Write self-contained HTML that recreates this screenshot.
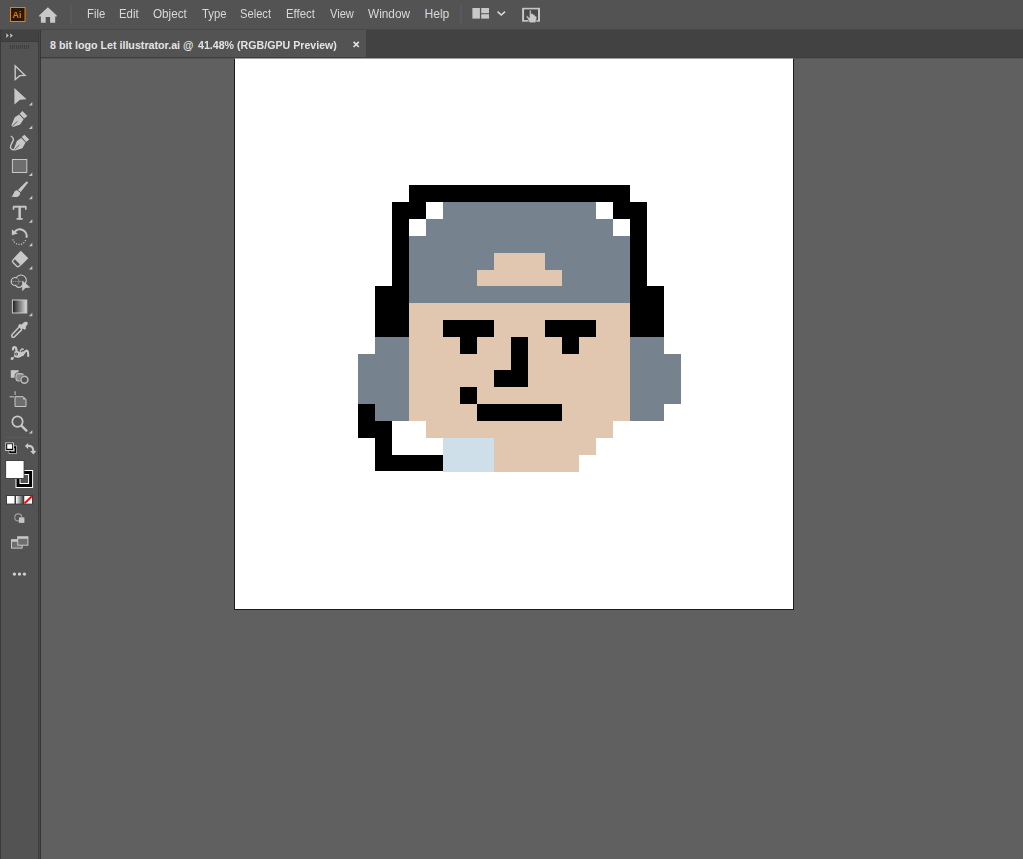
<!DOCTYPE html>
<html><head><meta charset="utf-8"><title>Illustrator</title>
<style>
html,body{margin:0;padding:0;}
body{width:1023px;height:859px;overflow:hidden;background:#606060;position:relative;font-family:"Liberation Sans",sans-serif;}
#menubar{position:absolute;left:0;top:0;width:1023px;height:29px;background:#535353;}
#menubar .mi{position:absolute;top:6px;font-size:12px;line-height:16px;color:#d8d8d8;white-space:nowrap;transform-origin:0 50%;}
#tabbar{position:absolute;left:0;top:29px;width:1023px;height:29px;background:#424242;}
#tabtop{position:absolute;left:0;top:29px;width:1023px;height:1px;background:#484848;}
#tab{position:absolute;left:41px;top:30px;width:325px;height:27px;background:#535353;}
#tab .tt{position:absolute;left:9px;top:8px;font-size:10.7px;font-weight:bold;line-height:14px;color:#e4e4e4;white-space:nowrap;transform-origin:0 50%;}
#tab .tx{position:absolute;left:311px;top:6px;font-size:10px;font-weight:bold;line-height:14px;color:#e4e4e4;}
#tabline{position:absolute;left:41px;top:57px;width:982px;height:1px;background:#3e3e3e;}
#canvas{position:absolute;left:41px;top:58px;width:982px;height:801px;background:#606060;border-top:1px solid #545454;box-sizing:border-box;}
#artboard{position:absolute;left:234px;top:58px;width:558px;height:550px;background:#fff;border:1px solid #1a1a1a;border-top-color:#a0a0a0;}
#tools{position:absolute;left:0;top:30px;width:41px;height:829px;background:#535353;}
#tools .hd{position:absolute;left:0;top:0;width:39px;height:11px;background:#424242;}
#tools .hl{position:absolute;left:0;top:11px;width:39px;height:1px;background:#3c3c3c;}
#tools .le{position:absolute;left:0;top:0;width:1px;height:829px;background:#3a3a3a;}
#tools .r1{position:absolute;left:38px;top:0;width:1px;height:829px;background:#3c3c3c;}
#tools .r2{position:absolute;left:39px;top:0;width:1px;height:829px;background:#484848;}
#tools .r3{position:absolute;left:40px;top:0;width:1px;height:829px;background:#363636;}
svg{position:absolute;left:0;top:0;overflow:visible;}
svg text{font-family:"Liberation Sans",sans-serif;}
</style></head><body>

<div id="canvas"></div>
<div id="artboard"></div>
<svg id="art" width="1023" height="859" viewBox="0 0 1023 859" shape-rendering="crispEdges">
<rect x="408.83" y="185.40" width="221.13" height="16.82" fill="#000000"/>
<rect x="391.82" y="202.22" width="34.02" height="16.82" fill="#000000"/>
<rect x="442.85" y="202.22" width="153.09" height="16.82" fill="#76838f"/>
<rect x="612.95" y="202.22" width="34.02" height="16.82" fill="#000000"/>
<rect x="391.82" y="219.04" width="17.01" height="16.82" fill="#000000"/>
<rect x="425.84" y="219.04" width="187.11" height="16.82" fill="#76838f"/>
<rect x="629.96" y="219.04" width="17.01" height="16.82" fill="#000000"/>
<rect x="391.82" y="235.86" width="17.01" height="16.82" fill="#000000"/>
<rect x="408.83" y="235.86" width="221.13" height="16.82" fill="#76838f"/>
<rect x="629.96" y="235.86" width="17.01" height="16.82" fill="#000000"/>
<rect x="391.82" y="252.68" width="17.01" height="16.82" fill="#000000"/>
<rect x="408.83" y="252.68" width="85.05" height="16.82" fill="#76838f"/>
<rect x="493.88" y="252.68" width="51.03" height="16.82" fill="#e2c7b0"/>
<rect x="544.91" y="252.68" width="85.05" height="16.82" fill="#76838f"/>
<rect x="629.96" y="252.68" width="17.01" height="16.82" fill="#000000"/>
<rect x="391.82" y="269.50" width="17.01" height="16.82" fill="#000000"/>
<rect x="408.83" y="269.50" width="68.04" height="16.82" fill="#76838f"/>
<rect x="476.87" y="269.50" width="85.05" height="16.82" fill="#e2c7b0"/>
<rect x="561.92" y="269.50" width="68.04" height="16.82" fill="#76838f"/>
<rect x="629.96" y="269.50" width="17.01" height="16.82" fill="#000000"/>
<rect x="374.81" y="286.32" width="34.02" height="16.82" fill="#000000"/>
<rect x="408.83" y="286.32" width="221.13" height="16.82" fill="#76838f"/>
<rect x="629.96" y="286.32" width="34.02" height="16.82" fill="#000000"/>
<rect x="374.81" y="303.14" width="34.02" height="16.82" fill="#000000"/>
<rect x="408.83" y="303.14" width="221.13" height="16.82" fill="#e2c7b0"/>
<rect x="629.96" y="303.14" width="34.02" height="16.82" fill="#000000"/>
<rect x="374.81" y="319.96" width="34.02" height="16.82" fill="#000000"/>
<rect x="408.83" y="319.96" width="34.02" height="16.82" fill="#e2c7b0"/>
<rect x="442.85" y="319.96" width="51.03" height="16.82" fill="#000000"/>
<rect x="493.88" y="319.96" width="51.03" height="16.82" fill="#e2c7b0"/>
<rect x="544.91" y="319.96" width="51.03" height="16.82" fill="#000000"/>
<rect x="595.94" y="319.96" width="34.02" height="16.82" fill="#e2c7b0"/>
<rect x="629.96" y="319.96" width="34.02" height="16.82" fill="#000000"/>
<rect x="374.81" y="336.78" width="34.02" height="16.82" fill="#76838f"/>
<rect x="408.83" y="336.78" width="51.03" height="16.82" fill="#e2c7b0"/>
<rect x="459.86" y="336.78" width="17.01" height="16.82" fill="#000000"/>
<rect x="476.87" y="336.78" width="34.02" height="16.82" fill="#e2c7b0"/>
<rect x="510.89" y="336.78" width="17.01" height="16.82" fill="#000000"/>
<rect x="527.90" y="336.78" width="34.02" height="16.82" fill="#e2c7b0"/>
<rect x="561.92" y="336.78" width="17.01" height="16.82" fill="#000000"/>
<rect x="578.93" y="336.78" width="51.03" height="16.82" fill="#e2c7b0"/>
<rect x="629.96" y="336.78" width="34.02" height="16.82" fill="#76838f"/>
<rect x="357.80" y="353.60" width="51.03" height="16.82" fill="#76838f"/>
<rect x="408.83" y="353.60" width="102.06" height="16.82" fill="#e2c7b0"/>
<rect x="510.89" y="353.60" width="17.01" height="16.82" fill="#000000"/>
<rect x="527.90" y="353.60" width="102.06" height="16.82" fill="#e2c7b0"/>
<rect x="629.96" y="353.60" width="51.03" height="16.82" fill="#76838f"/>
<rect x="357.80" y="370.42" width="51.03" height="16.82" fill="#76838f"/>
<rect x="408.83" y="370.42" width="85.05" height="16.82" fill="#e2c7b0"/>
<rect x="493.88" y="370.42" width="34.02" height="16.82" fill="#000000"/>
<rect x="527.90" y="370.42" width="102.06" height="16.82" fill="#e2c7b0"/>
<rect x="629.96" y="370.42" width="51.03" height="16.82" fill="#76838f"/>
<rect x="357.80" y="387.24" width="51.03" height="16.82" fill="#76838f"/>
<rect x="408.83" y="387.24" width="51.03" height="16.82" fill="#e2c7b0"/>
<rect x="459.86" y="387.24" width="17.01" height="16.82" fill="#000000"/>
<rect x="476.87" y="387.24" width="153.09" height="16.82" fill="#e2c7b0"/>
<rect x="629.96" y="387.24" width="51.03" height="16.82" fill="#76838f"/>
<rect x="357.80" y="404.06" width="17.01" height="16.82" fill="#000000"/>
<rect x="374.81" y="404.06" width="34.02" height="16.82" fill="#76838f"/>
<rect x="408.83" y="404.06" width="68.04" height="16.82" fill="#e2c7b0"/>
<rect x="476.87" y="404.06" width="85.05" height="16.82" fill="#000000"/>
<rect x="561.92" y="404.06" width="68.04" height="16.82" fill="#e2c7b0"/>
<rect x="629.96" y="404.06" width="34.02" height="16.82" fill="#76838f"/>
<rect x="357.80" y="420.88" width="34.02" height="16.82" fill="#000000"/>
<rect x="425.84" y="420.88" width="187.11" height="16.82" fill="#e2c7b0"/>
<rect x="374.81" y="437.70" width="17.01" height="16.82" fill="#000000"/>
<rect x="442.85" y="437.70" width="51.03" height="16.82" fill="#cfdfea"/>
<rect x="493.88" y="437.70" width="102.06" height="16.82" fill="#e2c7b0"/>
<rect x="374.81" y="454.52" width="68.04" height="16.82" fill="#000000"/>
<rect x="442.85" y="454.52" width="51.03" height="17.62" fill="#cfdfea"/>
<rect x="493.88" y="454.52" width="85.05" height="17.62" fill="#e2c7b0"/>

</svg>

<div id="menubar">
<span class="mi" style="left:87px;transform:scaleX(0.94)">File</span>
<span class="mi" style="left:119px;transform:scaleX(0.95)">Edit</span>
<span class="mi" style="left:153px;transform:scaleX(0.975)">Object</span>
<span class="mi" style="left:202px;transform:scaleX(0.94)">Type</span>
<span class="mi" style="left:240px;transform:scaleX(0.93)">Select</span>
<span class="mi" style="left:286.3px;transform:scaleX(0.95)">Effect</span>
<span class="mi" style="left:329.6px;transform:scaleX(0.925)">View</span>
<span class="mi" style="left:368px;transform:scaleX(0.985)">Window</span>
<span class="mi" style="left:424.6px;transform:scaleX(1.0)">Help</span>
</div>
<div id="tabbar"></div><div id="tabtop"></div>
<div id="tab"><span class="tt">8 bit logo Let illustrator.ai @</span><span class="tt" style="left:157px;transform:scaleX(0.995)">41.48% (RGB/GPU Preview)</span></div>
<div id="tabline"></div>
<div id="tools"><div class="hd"></div><div class="hl"></div><div class="le"></div><div class="r1"></div><div class="r2"></div><div class="r3"></div></div>

<svg id="ui" width="1023" height="859" viewBox="0 0 1023 859">
<defs>
<filter id="nf" x="-10%" y="-10%" width="120%" height="120%"><feOffset dx="0" dy="0"/></filter>
<linearGradient id="gr" x1="0" x2="1" y1="0" y2="0"><stop offset="0" stop-color="#1e1e1e"/><stop offset="1" stop-color="#dcdcdc"/></linearGradient>
<linearGradient id="gr2" x1="0" x2="1" y1="0" y2="0"><stop offset="0" stop-color="#ffffff"/><stop offset="1" stop-color="#3a3a3a"/></linearGradient>
</defs>
<!-- Ai logo -->
<rect x="10.5" y="7.5" width="14.5" height="14" fill="#2e1700" stroke="#f07d0a" stroke-width="1"/>
<text x="12.6" y="18.3" font-size="9" font-weight="bold" filter="url(#nf)" fill="#e07a0a">Ai</text>
<!-- home -->
<path d="M47.9,7.3 L56.8,15.6 L56.8,16.6 L55.2,16.6 L55.2,22.7 L50.1,22.7 L50.1,17 L45.7,17 L45.7,22.7 L40.9,22.7 L40.9,16.6 L39.1,16.6 L39.1,15.6 Z" fill="#c8c8c8"/>
<rect x="70.5" y="5" width="1" height="19" fill="#606060"/>
<rect x="460.5" y="5" width="1" height="19" fill="#606060"/>
<!-- workspace switcher -->
<rect x="472.4" y="8" width="7.5" height="10.6" fill="#c8c8c8"/>
<rect x="481.2" y="8" width="7.8" height="5.2" fill="#c8c8c8"/>
<rect x="481.2" y="14.2" width="7.8" height="4.4" fill="#c8c8c8"/>
<path d="M497.6,11.6 L501.3,15 L505,11.6" fill="none" stroke="#dcdcdc" stroke-width="1.5"/>
<!-- touch workspace -->
<rect x="522.1" y="7.8" width="17.9" height="13.9" fill="#c6c6c6"/>
<rect x="524.1" y="9.4" width="13.9" height="10.7" fill="#4a4a4a"/>
<path d="M529.4,10.4 Q530.2,9.5 531.1,10.4 L531.1,13.6 L532.4,13.2 L533.2,14.4 L534.4,14.6 L535,15.8 L536.2,16.2 Q537,16.8 536.8,18 L535.6,22.8 L529.9,22.8 L526.2,16.6 Q526,15.6 527,15.6 L529.4,17.8 Z" fill="#c8c8c8" stroke="#4a4a4a" stroke-width="0.5"/>
<path d="M353.6,41.8 L358.8,47 M358.8,41.8 L353.6,47" stroke="#e0e0e0" stroke-width="1.7" fill="none"/>
<!-- toolbar chevrons / grip -->
<path d="M5.9,33.2 L8.8,35.6 L5.9,38 L6.6,35.6 Z M9.9,33.2 L12.8,35.6 L9.9,38 L10.6,35.6 Z" fill="#cfcfcf"/>
<g fill="#3e3e3e"><rect x="10" y="45" width="1" height="4"/><rect x="12" y="45" width="1" height="4"/><rect x="14" y="45" width="1" height="4"/><rect x="16" y="45" width="1" height="4"/><rect x="18" y="45" width="1" height="4"/><rect x="20" y="45" width="1" height="4"/><rect x="22" y="45" width="1" height="4"/><rect x="24" y="45" width="1" height="4"/><rect x="26" y="45" width="1" height="4"/><rect x="28" y="45" width="1" height="4"/></g>

<!-- selection -->
<path d="M15.2,66 L15.2,79.6 L19.9,75.6 L25,75.3 Z" fill="none" stroke="#c8c8c8" stroke-width="1.4" stroke-miterlimit="10"/>
<!-- direct selection -->
<path d="M14.4,88 L14.4,104.6 L20,99.8 L26.6,99.2 Z" fill="#c8c8c8"/>
<path d="M32.3,102 v3.4 h-3.4 z" fill="#c8c8c8"/>
<!-- pen -->
<g fill="#c8c8c8">
<path d="M22.4,111.1 L27.4,115.9 L24.2,118.6 L19.7,113.7 Z"/>
<path d="M19.1,114.5 L23.6,119.2 L20.2,124.6 L13.1,127 L11.3,125.4 L14.8,117.3 Z"/>
</g>
<path d="M12.4,126 L17.4,121.4" stroke="#535353" stroke-width="0.9" fill="none"/>
<path d="M32.3,125.6 v3.4 h-3.4 z" fill="#c8c8c8"/>
<!-- curvature -->
<g fill="#c8c8c8">
<path d="M24.4,134.7 L29.2,139.5 L26.2,141.9 L21.7,137.1 Z"/>
<path d="M21.1,138 L25.6,142.5 L22.4,148.2 L15.1,150.6 L13.6,149.3 L16.9,140.9 Z"/>
</g>
<path d="M14.6,149.6 L19.4,145" stroke="#535353" stroke-width="0.9" fill="none"/>
<path d="M10.8,136 C13.6,137.6 14,139.4 12.6,141.8 C11,144.6 9.6,146.6 10.8,148.4 C11.8,149.8 13.2,150 14.6,149.6" fill="none" stroke="#c8c8c8" stroke-width="1.4"/>
<!-- rectangle -->
<rect x="12.4" y="159.5" width="14.4" height="13" fill="#6e6e6e" stroke="#c8c8c8" stroke-width="1"/>
<path d="M32.3,172.5 v3.4 h-3.4 z" fill="#c8c8c8"/>
<!-- brush -->
<path d="M26.6,181.6 C27.6,181.2 28.2,182 27.6,183.2 L20.7,192.1 L17.9,189.9 L25.4,182.4 Z" fill="#c8c8c8"/>
<path d="M17.4,190.4 L20.2,192.7 C20.4,194.2 19.6,195.6 18.2,196.4 C16.6,197.2 14,197 11.3,196.8 C13,195.6 13.4,193.6 14.2,192.2 C15,190.8 16.4,190 17.4,190.4 Z" fill="#c8c8c8"/>
<path d="M32.3,195.8 v3.4 h-3.4 z" fill="#c8c8c8"/>
<!-- type -->
<text x="12.9" y="218.9" font-size="19" filter="url(#nf)" fill="#c8c8c8" stroke="#c8c8c8" stroke-width="0.3" textLength="13.5" lengthAdjust="spacingAndGlyphs">T</text>
<path d="M12.7,206.4 h1.6 v3.4 h-1.6 z M25,206.4 h1.6 v3.4 h-1.6 z M16.6,218 h6.1 v1.8 h-6.1 z" fill="#c8c8c8"/>
<path d="M32.3,219.3 v3.4 h-3.4 z" fill="#c8c8c8"/>
<!-- rotate -->
<path d="M14.6,232 A6.7,6.7 0 0 1 26.4,237.8" fill="none" stroke="#c8c8c8" stroke-width="2"/>
<path d="M11.9,229.4 L11.9,235.2 L17.8,233.6 Z" fill="#c8c8c8"/>
<path d="M25.6,240.2 A6.7,6.7 0 0 1 12.8,239.2" fill="none" stroke="#c8c8c8" stroke-width="1.3" stroke-dasharray="1.1 1.5"/>
<path d="M32.3,242.8 v3.4 h-3.4 z" fill="#c8c8c8"/>
<!-- eraser -->
<path d="M20.8,250.8 L28.3,258.2 L21.1,265.5 L13.7,258.2 Z" fill="#c8c8c8"/>
<path d="M14.34,258.83 L13.01,260.19 Q11.89,261.33 13.03,262.45 L16.80,266.17 Q17.94,267.30 19.06,266.16 L20.39,264.80" fill="none" stroke="#c8c8c8" stroke-width="1.4"/>
<path d="M32.3,266.1 v3.4 h-3.4 z" fill="#c8c8c8"/>
<!-- shape builder -->
<g fill="none" stroke="#c4c4c4" stroke-width="1.4">
<circle cx="15.2" cy="281.5" r="3.9"/><circle cx="21" cy="280.3" r="5.2"/><circle cx="19" cy="283.6" r="3.7"/>
</g>
<g fill="#535353">
<circle cx="15.2" cy="281.5" r="3.2"/><circle cx="21" cy="280.3" r="4.5"/><circle cx="19" cy="283.6" r="3"/>
</g>
<path d="M17.6,278.4 A3.9,3.9 0 0 1 17.6,284.6" fill="none" stroke="#8c8c8c" stroke-width="1"/>
<path d="M12.8,281.5 H22" fill="none" stroke="#b0b0b0" stroke-width="0.8" stroke-dasharray="1 0.9"/>
<path d="M22.2,280.6 L22.2,291.2 L25.4,288 L30.4,287.4 Z" fill="#c8c8c8"/>
<!-- gradient -->
<rect x="12.4" y="300" width="14.4" height="13" fill="url(#gr)" stroke="#c8c8c8" stroke-width="1"/>
<path d="M32.3,312.8 v3.4 h-3.4 z" fill="#c8c8c8"/>
<!-- eyedropper -->
<path d="M25.9,321.7 C27.2,321.5 27.9,322.4 27.7,323.6 C27.6,324.6 27,325.4 26.2,326.2 L25.7,326.8 L26.1,328.6 L24.6,329.7 L22.8,328.6 L21.6,329.8 L18.3,326.4 L18.3,325.3 L19.8,324 L21.7,324.4 L23.4,322.7 C24.2,322.1 25,321.8 25.9,321.7 Z" fill="#c8c8c8"/>
<path d="M19.6,326.6 L12.3,334.3 Q11.1,335.8 12,336.9 Q13,337.8 14.4,336.8 L22,329.4" fill="none" stroke="#c8c8c8" stroke-width="1.5"/>
<!-- puppet warp -->
<g fill="none" stroke="#c8c8c8" stroke-linecap="round">
<path d="M13,349.5 C12.7,346.8 15.7,346.2 16.2,348.6 C16.6,350.4 16.4,352 17,354" stroke-width="2.2"/>
<path d="M22.8,354.8 C24.2,352.8 25.2,350.6 26.7,350.6 C28.4,350.8 28.2,353.6 28.2,356" stroke-width="2.1"/>
<path d="M20.4,352.4 C20.2,349.8 22,348.6 23.2,349.2" stroke-width="1.5"/>
<path d="M12.6,358.2 L14.4,356.6" stroke-width="0.9"/>
</g>
<path d="M14.3,351.6 L18,351 C19.4,352.6 20.6,352.2 21.8,351.2 L24.8,351.4 C24,354 22.8,356.6 19.6,357.4 C17,358 15,357.6 13.9,356.6 C14.5,355 14.6,353.2 14.3,351.6 Z" fill="#c8c8c8"/>
<circle cx="12.1" cy="358.5" r="1.5" fill="#c8c8c8"/>
<circle cx="16.5" cy="354" r="1.5" fill="#5a5a5a"/>
<circle cx="16.5" cy="354" r="0.6" fill="#b0b0b0"/>
<circle cx="21.5" cy="351.5" r="0.8" fill="#5a5a5a"/>
<!-- blend -->
<rect x="10.8" y="370.2" width="7.8" height="7.6" fill="#c8c8c8"/>
<rect x="16" y="373.6" width="7.4" height="7.2" rx="2.4" fill="#535353" stroke="#535353" stroke-width="2.8"/>
<rect x="16" y="373.6" width="7.4" height="7.2" rx="2.4" fill="#8c8c8c" stroke="#bcbcbc" stroke-width="1.2"/>
<circle cx="24.4" cy="379.8" r="3.5" fill="#535353" stroke="#535353" stroke-width="2.6"/>
<circle cx="24.4" cy="379.8" r="3.5" fill="#535353" stroke="#bcbcbc" stroke-width="1.5"/>
<!-- artboard -->
<path d="M15,396.7 H23.2 L26,399.5 V406.5 H15 Z" fill="#6e6e6e" stroke="#c8c8c8" stroke-width="1"/>
<path d="M23.2,396.7 V399.5 H26 Z" fill="#c8c8c8"/>
<path d="M15.1,391.2 V395 M9.6,396.8 H14" stroke="#c8c8c8" stroke-width="1" fill="none"/>
<!-- zoom -->
<circle cx="17.5" cy="421.6" r="5.2" fill="none" stroke="#c8c8c8" stroke-width="1.7"/>
<path d="M21.6,425.8 L26.4,430.6" stroke="#c8c8c8" stroke-width="2.4" stroke-linecap="round" fill="none"/>
<path d="M32.3,430.2 v3.4 h-3.4 z" fill="#c8c8c8"/>
<!-- divider -->
<rect x="5" y="437" width="29" height="1" fill="#5a5a5a"/>
<!-- default fill stroke -->
<rect x="9.2" y="446.1" width="7.2" height="7.2" fill="none" stroke="#c8c8c8" stroke-width="1"/>
<rect x="10.2" y="447.1" width="5.2" height="5.2" fill="#c8c8c8" stroke="#000" stroke-width="1.6"/>
<rect x="5.7" y="442.9" width="7.8" height="7.6" fill="#000" stroke="#c8c8c8" stroke-width="1"/>
<rect x="7.2" y="444.2" width="5" height="4.6" fill="#fff"/>
<!-- swap -->
<path d="M27.6,446 C31.6,445.6 33.4,447.4 33.4,451.4" fill="none" stroke="#c8c8c8" stroke-width="2.2"/>
<path d="M24.9,446.1 L28.1,443 L28.1,449 Z" fill="#c8c8c8"/>
<path d="M30.2,451 L36.4,451 L33.3,454.4 Z" fill="#c8c8c8"/>
<!-- stroke box -->
<rect x="15.5" y="470" width="17.6" height="18" fill="#fff"/>
<rect x="16.5" y="471" width="15.6" height="16" fill="#000"/>
<rect x="19.5" y="474" width="9.6" height="10" fill="#fff"/>
<rect x="20.5" y="475" width="7.6" height="8" fill="#535353"/>
<!-- fill box -->
<rect x="5.1" y="460" width="19.4" height="19" fill="#444"/>
<rect x="6.1" y="461" width="17.5" height="17" fill="#fff"/>
<!-- colour modes -->
<rect x="6" y="495" width="27" height="9.6" fill="#3c3c3c"/>
<rect x="7" y="496" width="7.5" height="7.6" fill="#fff"/>
<rect x="16" y="496" width="7.6" height="7.6" fill="url(#gr2)"/>
<rect x="24.3" y="496" width="7.7" height="7.6" fill="#fff"/>
<path d="M24.6,503.4 L31.9,496.2" stroke="#ff0000" stroke-width="2" fill="none"/>
<!-- draw mode -->
<circle cx="18.3" cy="517.4" r="3.5" fill="none" stroke="#a0a0a0" stroke-width="1.1"/>
<rect x="18.9" y="517.4" width="5.5" height="5.5" fill="#c4c4c4"/>
<!-- screen mode -->
<rect x="11.5" y="539.7" width="10.6" height="8.4" fill="#6e6e6e" stroke="#c8c8c8" stroke-width="1"/>
<rect x="11.5" y="539.7" width="10.6" height="2" fill="#c8c8c8"/>
<rect x="17.7" y="536.8" width="10.2" height="8.4" fill="#6e6e6e" stroke="#c8c8c8" stroke-width="1"/>
<rect x="17.7" y="536.8" width="10.2" height="2" fill="#c8c8c8"/>
<!-- dots -->
<circle cx="14.4" cy="574.1" r="1.7" fill="#d0d0d0"/>
<circle cx="19.5" cy="574.1" r="1.7" fill="#d0d0d0"/>
<circle cx="24.4" cy="574.1" r="1.7" fill="#d0d0d0"/>
</svg>
</body></html>
